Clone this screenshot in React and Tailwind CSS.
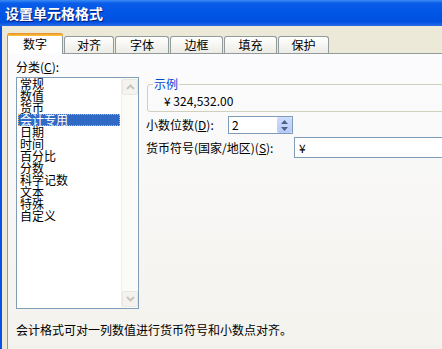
import React from "react";

const categories = [
  "常规",
  "数值",
  "货币",
  "会计专用",
  "日期",
  "时间",
  "百分比",
  "分数",
  "科学记数",
  "文本",
  "特殊",
  "自定义",
];

const tabs = [
  { label: "对齐", w: "w-[50px]" },
  { label: "字体", w: "w-[54px]" },
  { label: "边框", w: "w-[53px]" },
  { label: "填充", w: "w-[53px]" },
  { label: "保护", w: "w-[51px]" },
];

const Chevron = ({ down }) => (
  <svg width="9" height="6" viewBox="0 0 9 6">
    <path
      d={down ? "M1 1 L4.5 4.5 L8 1" : "M1 5 L4.5 1.5 L8 5"}
      fill="none"
      stroke="#c9c7bc"
      strokeWidth="2"
    />
  </svg>
);

const ScrollButton = ({ down }) => (
  <div className="w-[16px] h-[16px] rounded-[2px] border border-[#e9e7de] bg-[#f4f3ef] flex items-center justify-center">
    <Chevron down={down} />
  </div>
);

const Spinner = () => (
  <div className="w-[15px] h-full rounded-[2px] bg-gradient-to-b from-[#cfdcfd] to-[#b6c9f7] flex flex-col items-center justify-center gap-[3px]">
    <svg width="7" height="4" viewBox="0 0 7 4">
      <path d="M0 4 L3.5 0 L7 4 Z" fill="#4d6185" />
    </svg>
    <svg width="7" height="4" viewBox="0 0 7 4">
      <path d="M0 0 L3.5 4 L7 0 Z" fill="#4d6185" />
    </svg>
  </div>
);

export default function App() {
  return (
    <div
      className="w-[442px] h-[349px] overflow-hidden flex flex-col bg-[#ece9d8] text-[12px] leading-[12px] text-black"
      style={{ fontFamily: '"Noto Sans CJK SC", "Noto Sans", sans-serif' }}
    >
      {/* title bar */}
      <div className="h-[26px] shrink-0 flex items-center pl-[5px] bg-[linear-gradient(to_bottom,#3d8cf6_0%,#0a5de9_12%,#0055e5_50%,#0051df_85%,#2a6cea_100%)]">
        <span className="text-white font-bold text-[14px] leading-[14px] [text-shadow:1px_1px_#0a1c7a]">
          设置单元格格式
        </span>
      </div>

      <div className="flex-1 flex flex-col border-l-2 border-[#0a50e2]">
        {/* tabs */}
        <div className="mt-[7px] h-[20px] pl-[5px] flex items-end gap-[1px]">
          <div className="relative z-10 w-[56px] h-[21px] -mb-px bg-white border-x border-[#919b9c] rounded-t-[3px] flex flex-col">
            <div className="h-[3px] -mx-px rounded-t-[3px] bg-gradient-to-b from-[#e68b2c] to-[#ffc83c]" />
            <div className="flex-1 flex items-center justify-center pb-[2px]">数字</div>
          </div>
          {tabs.map((t) => (
            <div
              key={t.label}
              className={`${t.w} h-[17px] border border-b-0 border-[#919b9c] rounded-t-[3px] bg-gradient-to-b from-white to-[#ecebe5] flex items-center justify-center`}
            >
              {t.label}
            </div>
          ))}
        </div>

        {/* panel */}
        <div className="flex-1 ml-[5px] border-t border-l border-[#919b9c] bg-gradient-to-b from-[#fcfcfe] to-[#f3f2ed] flex flex-col">
          <div className="flex">
            {/* left column */}
            <div className="pl-[8px] pt-[7px] flex flex-col">
              <div>
                分类(<span className="underline">C</span>):
              </div>
              <div className="mt-[4px] w-[123px] h-[232px] border border-[#7f9db9] bg-white flex">
                <div className="flex-1 flex flex-col">
                  {categories.map((c) => (
                    <div
                      key={c}
                      className={`mx-[1px] h-[12px] pl-[2px] flex items-center ${
                        c === "会计专用"
                          ? "bg-[#316ac5] text-white outline-1 outline-dotted outline-[#d9b56a] -outline-offset-1"
                          : ""
                      }`}
                    >
                      {c}
                    </div>
                  ))}
                </div>
                <div className="w-[17px] bg-[#fbfbf8] border-l border-[#f0efe8] flex flex-col justify-between py-[1px]">
                  <ScrollButton />
                  <ScrollButton down />
                </div>
              </div>
            </div>

            {/* right column */}
            <div className="ml-[7px] flex flex-col">
              <div className="mt-[30px] ml-[1px] relative w-[320px] h-[28px] border border-[#d0d0bf] rounded-[3px] pl-[16px] pt-[10px]">
                <span className="absolute -top-[7px] left-[5px] px-[1px] bg-[#fbfbfc] text-[#0046d5]">
                  示例
                </span>
                <span>¥ 324,532.00</span>
              </div>

              <div className="mt-[4px] flex items-center">
                <div className="w-[82px]">
                  小数位数(<span className="underline">D</span>):
                </div>
                <div className="w-[65px] h-[18px] border border-[#7f9db9] bg-white flex items-center">
                  <span className="flex-1 pl-[3px]">2</span>
                  <Spinner />
                </div>
              </div>

              <div className="mt-[3px] flex items-center">
                <div className="w-[148px] whitespace-nowrap">
                  货币符号(国家/地区)(<span className="underline">S</span>):
                </div>
                <div className="w-[200px] h-[21px] border border-[#7f9db9] bg-white flex items-center pl-[4px]">
                  ¥
                </div>
              </div>
            </div>
          </div>

          <div className="mt-[15px] pl-[8px]">
            会计格式可对一列数值进行货币符号和小数点对齐。
          </div>
        </div>
      </div>
    </div>
  );
}
